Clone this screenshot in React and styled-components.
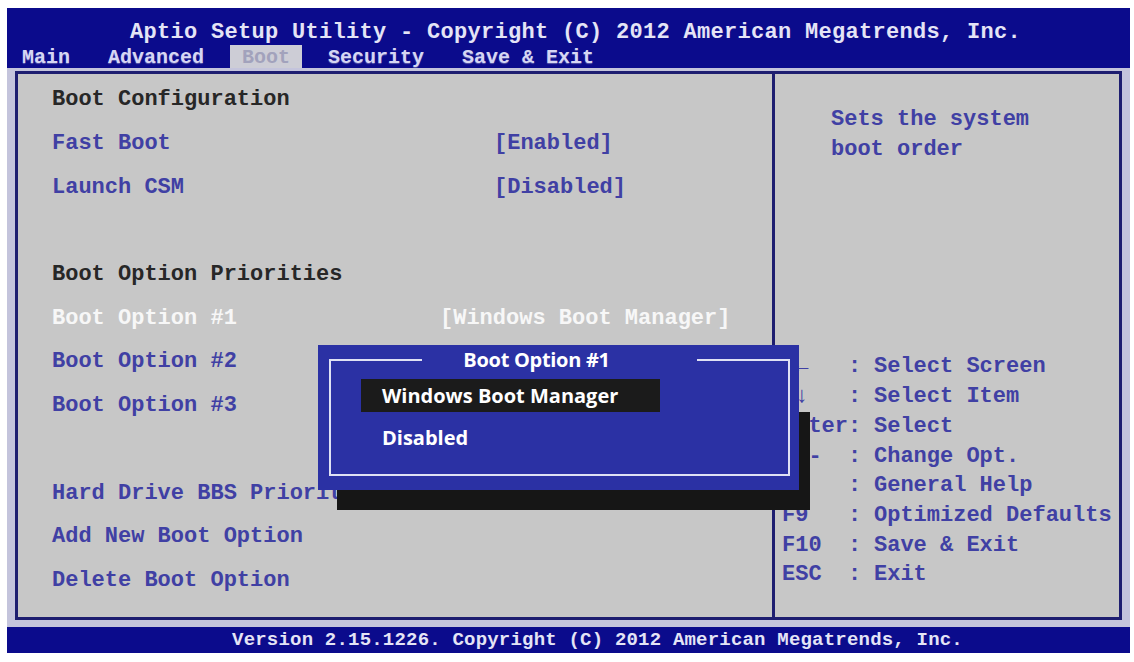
import React from 'react'
import styled, { createGlobalStyle } from 'styled-components'

const GlobalStyle = createGlobalStyle`
    body {
        margin: 0;
        background: #ffffff;
        font-family: "Liberation Mono", "DejaVu Sans Mono", monospace;
    }
`

const navy = '#0b0b8c'
const tones = {
    head: '#272727',
    link: '#4040a4',
    active: '#f7f7f7',
}

const Screen = styled.div`
    width: 1123px;
    margin: 8px 0 0 7px;
    display: flex;
    flex-direction: column;
`

const Header = styled.header`
    background: ${navy};
    height: 60px;
    display: flex;
    flex-direction: column;
`

const Title = styled.div`
    height: 37px;
    padding: 12px 0 0 14px;
    box-sizing: border-box;
    text-align: center;
    color: #e4e4f6;
    font-size: 22px;
    font-weight: bold;
    letter-spacing: 0.3px;
    line-height: 26px;
`

const MenuBar = styled.nav`
    display: flex;
    gap: 14px;
    padding-left: 3px;
    height: 23px;
`

const Tab = styled.div`
    padding: 2px 12px 0;
    font-size: 20px;
    font-weight: bold;
    line-height: 21px;
    color: ${p => (p.$active ? '#a2a2bc' : '#d6d6f4')};
    background: ${p => (p.$active ? '#cdcdd6' : 'transparent')};
    text-shadow: ${p => (p.$active ? 'none' : '0 1px 1px #5a5aa8')};
`

const Body = styled.main`
    background: #c4c4dc;
    padding: 3px 8px 7px 8px;
`

const Frame = styled.div`
    border: 3px solid #1e1e70;
    background: #c7c7c7;
    height: 549px;
    box-sizing: border-box;
    display: grid;
    grid-template-columns: 754px 1fr;
`

const LeftPanel = styled.section`
    position: relative;
    padding: 4px 0 0 34px;
`

const Row = styled.div`
    display: flex;
    align-items: center;
    height: 43.7px;
    font-size: 22px;
    font-weight: bold;
    white-space: pre;
    color: ${p => tones[p.$tone]};
`

const Label = styled.span`
    width: 442px;
    flex-shrink: 0;
`

const Value = styled.span`
    margin-left: ${p => p.$shift || 0}px;
`

const RightPanel = styled.aside`
    border-left: 3px solid #1e1e70;
    padding-top: 31px;
    color: ${tones.link};
    font-size: 22px;
    font-weight: bold;
    line-height: 29.7px;
    white-space: pre;
`

const Description = styled.div`
    margin-left: 56px;
`

const KeyList = styled.div`
    margin-top: 188px;
    padding-left: 7px;
`

const KeyRow = styled.div`
    display: flex;
`

const Key = styled.span`
    width: 66px;
`

const Sep = styled.span`
    width: 26px;
`

const Popup = styled.div`
    position: absolute;
    left: 300px;
    top: 271px;
    width: 481px;
    z-index: 1;

    &::before {
        content: '';
        position: absolute;
        left: 19px;
        top: 67px;
        right: -11px;
        bottom: -20px;
        background: #161616;
        z-index: -1;
    }
`

const PopupBox = styled.div`
    background: #2b31a4;
    height: 145px;
    box-sizing: border-box;
    padding: 3px 9px 14px 11px;
    font-family: "Open Sans", "Noto Sans", sans-serif;
    font-weight: bold;
    color: #ffffff;
`

const PopupFrame = styled.fieldset`
    margin: 0;
    height: 100%;
    box-sizing: border-box;
    border: 2px solid #dfe1f4;
    padding: 0;
`

const PopupTitle = styled.legend`
    margin: 0 auto;
    padding: 0 87px 0 41px;
    font-size: 20px;
    letter-spacing: -0.3px;
    line-height: 24px;
`

const Choice = styled.div`
    width: 299px;
    height: 33px;
    margin: ${p => (p.$first ? 7 : 9)}px 0 0 30px;
    padding-left: 21px;
    box-sizing: border-box;
    font-size: 20px;
    line-height: 33px;
    background: ${p => (p.$selected ? '#1b1b1b' : 'transparent')};
`

const Footer = styled.footer`
    background: ${navy};
    height: 26px;
    text-align: center;
    color: #e4e4f6;
    font-size: 19px;
    font-weight: bold;
    letter-spacing: 0.2px;
    line-height: 27px;
    padding-left: 58px;
`

const menu = ['Main', 'Advanced', 'Boot', 'Security', 'Save & Exit']

const rows = [
    { label: 'Boot Configuration', tone: 'head' },
    { label: 'Fast Boot', value: '[Enabled]', tone: 'link' },
    { label: 'Launch CSM', value: '[Disabled]', tone: 'link' },
    { label: '', tone: 'link' },
    { label: 'Boot Option Priorities', tone: 'head' },
    { label: 'Boot Option #1', value: '[Windows Boot Manager]', tone: 'active', shift: -54 },
    { label: 'Boot Option #2', tone: 'link' },
    { label: 'Boot Option #3', tone: 'link' },
    { label: '', tone: 'link' },
    { label: 'Hard Drive BBS Priorities', tone: 'link' },
    { label: 'Add New Boot Option', tone: 'link' },
    { label: 'Delete Boot Option', tone: 'link' },
]

const keys = [
    ['\u2192\u2190', 'Select Screen'],
    ['\u2191\u2193', 'Select Item'],
    ['Enter', 'Select'],
    ['+/-', 'Change Opt.'],
    ['F1', 'General Help'],
    ['F9', 'Optimized Defaults'],
    ['F10', 'Save & Exit'],
    ['ESC', 'Exit'],
]

export default function App() {
    return (
        <>
            <GlobalStyle />
            <Screen>
                <Header>
                    <Title>Aptio Setup Utility - Copyright (C) 2012 American Megatrends, Inc.</Title>
                    <MenuBar>
                        {menu.map(item => (
                            <Tab key={item} $active={item === 'Boot'}>{item}</Tab>
                        ))}
                    </MenuBar>
                </Header>
                <Body>
                    <Frame>
                        <LeftPanel>
                            {rows.map((row, i) => (
                                <Row key={i} $tone={row.tone}>
                                    <Label>{row.label}</Label>
                                    {row.value && <Value $shift={row.shift}>{row.value}</Value>}
                                </Row>
                            ))}
                            <Popup>
                                <PopupBox>
                                    <PopupFrame>
                                        <PopupTitle>Boot Option #1</PopupTitle>
                                        <Choice $first $selected>Windows Boot Manager</Choice>
                                        <Choice>Disabled</Choice>
                                    </PopupFrame>
                                </PopupBox>
                            </Popup>
                        </LeftPanel>
                        <RightPanel>
                            <Description>
                                <div>Sets the system</div>
                                <div>boot order</div>
                            </Description>
                            <KeyList>
                                {keys.map(([k, action]) => (
                                    <KeyRow key={k}>
                                        <Key>{k}</Key>
                                        <Sep>:</Sep>
                                        <span>{action}</span>
                                    </KeyRow>
                                ))}
                            </KeyList>
                        </RightPanel>
                    </Frame>
                </Body>
                <Footer>Version 2.15.1226. Copyright (C) 2012 American Megatrends, Inc.</Footer>
            </Screen>
        </>
    )
}
